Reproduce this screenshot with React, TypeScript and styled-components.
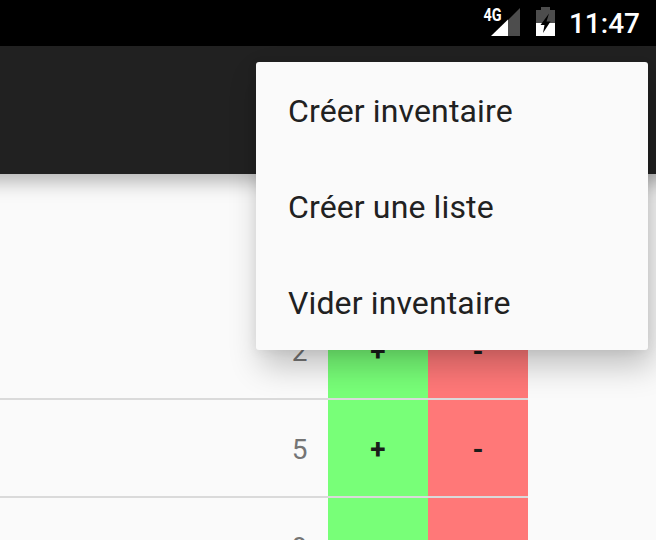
import React from "react";
import styled, { createGlobalStyle } from "styled-components";

const GlobalStyle = createGlobalStyle`
  * { box-sizing: border-box; }
  body { margin: 0; overflow: hidden; background: #fafafa; font-family: Roboto, sans-serif; }
`;

const Screen = styled.div`
  position: relative;
  display: flex;
  flex-direction: column;
  width: 656px;
  height: 540px;
  overflow: hidden;
  background: #fafafa;
`;

const StatusBar = styled.header`
  display: flex;
  flex: none;
  justify-content: flex-end;
  height: 46px;
  padding-right: 16px;
  background: #000;
  color: #fff;
`;

const NetworkLabel = styled.span`
  height: 18px;
  margin: 6px -11px 0 0;
  font-size: 18px;
  line-height: 18px;
  font-weight: 700;
  transform: scaleX(0.8);
  transform-origin: right;
`;

const SignalIcon = styled.svg`
  width: 29px;
  height: 29px;
  margin: 8px 16px 0 0;
`;

const BatteryIcon = styled.svg`
  width: 19px;
  height: 29px;
  margin: 7px 14px 0 0;
`;

const Clock = styled.time`
  font-size: 28px;
  line-height: 48px;
  font-weight: 500;
`;

const AppBar = styled.div`
  flex: none;
  height: 128px;
  margin: 0 -30px;
  background: #212121;
  box-shadow: 0 8px 18px rgba(0, 0, 0, 0.28);
`;

const Inventory = styled.main`
  display: flex;
  flex-direction: column;
  width: 528px;
  padding-top: 128px;
`;

const Row = styled.div`
  display: grid;
  flex: none;
  grid-template-columns: 328px 100px 100px;
  grid-template-rows: 96px;
  height: 98px;
  border-bottom: 2px solid #dadada;
`;

const Quantity = styled.span`
  padding-right: 20.5px;
  color: #757575;
  font-size: 28px;
  line-height: 100px;
  text-align: right;
`;

const StepButton = styled.button<{ $color: string }>`
  padding: 4px 0 0;
  border: 0;
  background: ${({ $color }) => $color};
  color: #1a1d1a;
  font: 700 28px/92px Roboto, sans-serif;
  text-align: center;
`;

const Menu = styled.nav`
  position: absolute;
  top: 62px;
  left: 256px;
  width: 392px;
  border-radius: 3px;
  background: #fafafa;
  box-shadow: 5px 16px 32px rgba(0, 0, 0, 0.23), 0 2px 12px rgba(0, 0, 0, 0.06);
`;

const MenuItem = styled.div`
  height: 96px;
  padding: 1px 32px 0;
  color: #212121;
  font-size: 32px;
  line-height: 96px;
  letter-spacing: 0.13px;
`;

const quantities = [2, 5, 9];
const menuItems = ["Créer inventaire", "Créer une liste", "Vider inventaire"];

export default function App() {
  return (
    <>
      <GlobalStyle />
      <Screen>
        <StatusBar>
          <NetworkLabel>4G</NetworkLabel>
          <SignalIcon viewBox="0 0 29 29">
            <path d="M17 12 29 0V28H17Z" fill="#4d4d4d" />
            <path d="M0 28 17 11.5V28Z" fill="#fff" />
          </SignalIcon>
          <BatteryIcon viewBox="0 0 19 29">
            <path d="M5 0H14V3H19V16H0V3H5Z" fill="#4d4d4d" />
            <path d="M0 16H19V29H0Z" fill="#fff" />
            <path d="M13 6.5 4.5 18H8.5L7 26 14.5 14.5H10.5Z" fill="#000" />
          </BatteryIcon>
          <Clock>11:47</Clock>
        </StatusBar>
        <AppBar />
        <Inventory>
          {quantities.map((quantity) => (
            <Row key={quantity}>
              <Quantity>{quantity}</Quantity>
              <StepButton $color="#78ff78">+</StepButton>
              <StepButton $color="#ff7878">-</StepButton>
            </Row>
          ))}
        </Inventory>
        <Menu>
          {menuItems.map((item) => (
            <MenuItem key={item}>{item}</MenuItem>
          ))}
        </Menu>
      </Screen>
    </>
  );
}
